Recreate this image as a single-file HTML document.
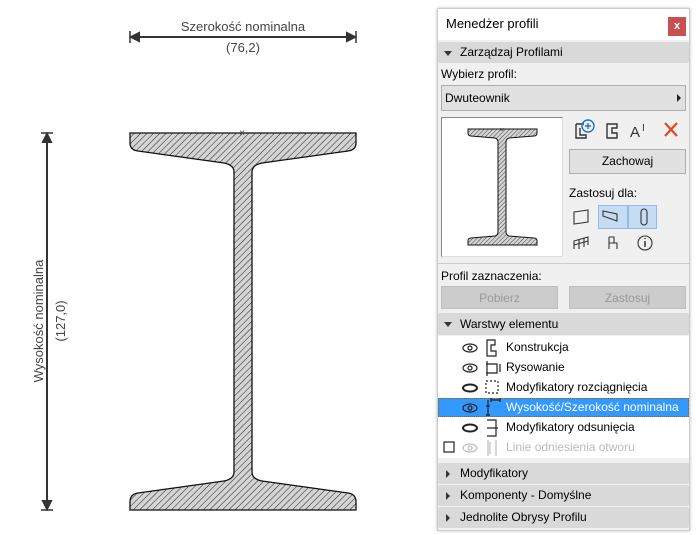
<!DOCTYPE html>
<html><head><meta charset="utf-8"><style>
*{margin:0;padding:0;box-sizing:border-box}
body{width:696px;height:535px;background:#fff;position:relative;overflow:hidden;font-family:"Liberation Sans",sans-serif;font-size:12px;color:#000}
.a{position:absolute}
.hdr{position:absolute;left:438px;width:251px;background:#d9d9d9;border-radius:2px;font-size:12px;line-height:21px;padding-left:22px}
.hdr:before{content:"";position:absolute;left:8px;top:7px;border-left:4px solid #333;border-top:4px solid transparent;border-bottom:4px solid transparent}
.hdr.o:before{left:6px;top:9px;border-top:5px solid #333;border-left:4px solid transparent;border-right:4px solid transparent;border-bottom:0}
.btn{position:absolute;background:#e1e1e1;border:1px solid #adadad;text-align:center;line-height:22px;font-size:12px}
.row{position:absolute;left:506px;font-size:12px}
</style></head><body>
<svg class="a" style="left:0;top:0" width="430" height="535">
<defs><pattern id="h" width="4.5" height="4.5" patternUnits="userSpaceOnUse" patternTransform="rotate(45)"><rect width="4.5" height="4.5" fill="#d4d4d4"/><line x1="0" y1="0" x2="0" y2="4.5" stroke="#222" stroke-width="1"/></pattern></defs>
<path d="M130,133 H356 V143 Q356,150 348,151 L262,163 Q252,165 252,172 V472 Q252,479 262,481 L348,493 Q356,494 356,502 V510 H130 V502 Q130,494 138,493 L224,481 Q234,479 234,472 V172 Q234,165 224,163 L138,151 Q130,150 130,143 Z" fill="url(#h)" stroke="#111" stroke-width="1.3"/>
<text x="242" y="136" font-size="10" fill="#444" text-anchor="middle" font-family="Liberation Sans">×</text>
<g stroke="#333" stroke-width="2" fill="#333">
<line x1="130" y1="37" x2="356" y2="37"/><line x1="130" y1="31" x2="130" y2="43" stroke-width="1.5"/><line x1="356" y1="31" x2="356" y2="43" stroke-width="1.5"/>
<path d="M131,37 l8,-4 v8z M355,37 l-8,-4 v8z"/>
<line x1="47" y1="133" x2="47" y2="510"/><line x1="41" y1="133" x2="53" y2="133" stroke-width="1.5"/><line x1="41" y1="510" x2="53" y2="510" stroke-width="1.5"/>
<path d="M47,134 l-4,8 h8z M47,509 l-4,-8 h8z"/>
</g>
<g font-family="Liberation Sans" font-size="13" fill="#444" text-anchor="middle">
<text x="243" y="31">Szerokość nominalna</text><text x="243" y="52">(76,2)</text>
<text transform="translate(43,321) rotate(-90)">Wysokość nominalna</text>
<text transform="translate(65,321) rotate(-90)">(127,0)</text>
</g>
</svg>
<div class="a" style="left:437px;top:8px;width:253px;height:523px;background:#f0f0f0;border:1px solid #ccc;box-shadow:0 0 3px #bbb"></div>
<div class="a" style="left:438px;top:9px;width:251px;height:31px;background:#fff"></div>
<div class="a" style="left:446px;top:16px;font-size:13px">Menedżer profili</div>
<div class="a" style="left:668px;top:17px;width:18px;height:19px;background:#c75050;color:#fff;font-size:11px;text-align:center;line-height:18px;font-weight:bold">x</div>
<div class="hdr o" style="top:42px;height:21px">Zarządzaj Profilami</div>
<div class="a" style="left:441px;top:67px">Wybierz profil:</div>
<div class="a" style="left:441px;top:85px;width:245px;height:26px;background:#e1e1e1;border:1px solid #adadad;line-height:24px;padding-left:3px">Dwuteownik</div>
<div class="a" style="left:677px;top:94px;border-left:4px solid #222;border-top:4px solid transparent;border-bottom:4px solid transparent"></div>
<div class="a" style="left:441px;top:117px;width:122px;height:140px;background:#fff;border:1px solid #888;border-right-color:#ddd;border-bottom-color:#ddd"></div>
<svg class="a" style="left:441px;top:117px" width="122" height="140">
<defs><pattern id="h2" width="3" height="3" patternUnits="userSpaceOnUse" patternTransform="rotate(45)"><rect width="3" height="3" fill="#d4d4d4"/><line x1="0" y1="0" x2="0" y2="3" stroke="#222" stroke-width="0.8"/></pattern></defs>
<path d="M27,12 H96 V16 Q96,19 93,19 L68,21 Q65,22 65,25 V115 Q65,118 68,119 L93,121 Q96,121 96,124 V128 H27 V124 Q27,121 30,121 L54,119 Q57,118 57,115 V25 Q57,22 54,21 L30,19 Q27,19 27,16 Z" fill="url(#h2)" stroke="#111" stroke-width="1"/>
<text x="61" y="15" font-size="7" fill="#333" text-anchor="middle">×</text>
</svg>
<svg class="a" style="left:572px;top:118px" width="115" height="24" fill="none" stroke="#333" stroke-width="1.4">
<path d="M4,6 H12 M4,6 V20 H14 V17 H8 V10"/><circle cx="16" cy="8" r="6" stroke="#1a73d0"/><path d="M16,5 V11 M13,8 H19" stroke="#1a73d0"/>
<path d="M35,6 H45 V10 H40 V15 H45 V20 H35 Z"/>
<text x="58" y="19" font-size="15" fill="#333" stroke="none" font-family="Liberation Sans">A</text><text x="70" y="13" font-size="10" fill="#333" stroke="none">I</text>
<path d="M93,5 L105,18 M105,5 L93,18" stroke="#e8431e" stroke-width="2.2"/>
</svg>
<div class="btn" style="left:569px;top:149px;width:117px;height:25px">Zachowaj</div>
<div class="a" style="left:569px;top:186px">Zastosuj dla:</div>
<div class="a" style="left:598px;top:205px;width:30px;height:24px;background:#c5dcf2;border:1px solid #8fbcea"></div>
<div class="a" style="left:628px;top:205px;width:29px;height:24px;background:#c5dcf2;border:1px solid #8fbcea"></div>
<svg class="a" style="left:569px;top:205px" width="120" height="52" fill="none" stroke="#333" stroke-width="1.1">
<path d="M5,7 L19,5 V17 L5,19 Z"/>
<path d="M34,6 L48,9 V16 L34,11 Z M34,6 V11"/>
<rect x="72" y="4" width="6" height="16" rx="3"/>
<path d="M5,44 V36 L19,32 V40 M5,40 L19,36 M10,44 V35 M15,42 V33"/>
<path d="M40,32 h5 v6 h3 v6 M40,32 v12 M40,38 h8"/>
<circle cx="76" cy="38" r="7"/><path d="M76,36 V42 M76,33 V34" stroke-width="1.5"/>
</svg>
<div class="a" style="left:438px;top:263px;width:251px;border-top:1px solid #ccc"></div>
<div class="a" style="left:441px;top:269px">Profil zaznaczenia:</div>
<div class="btn" style="left:441px;top:286px;width:117px;height:23px;color:#999;background:#ccc;border-color:#bfbfbf">Pobierz</div>
<div class="btn" style="left:569px;top:286px;width:117px;height:23px;color:#999;background:#ccc;border-color:#bfbfbf">Zastosuj</div>
<div class="hdr o" style="top:313px;height:22px;line-height:22px">Warstwy elementu</div>
<div class="a" style="left:438px;top:336px;width:251px;height:122px;background:#fff"></div>
<div class="a" style="left:438px;top:398px;width:251px;height:19px;background:#3399ff;border:1px dotted #a06000"></div>
<svg class="a" style="left:438px;top:336px" width="70" height="122" fill="none" stroke="#222" stroke-width="1.2">
<g><ellipse cx="32" cy="12" rx="7" ry="4"/><circle cx="32" cy="12" r="2"/></g>
<g><ellipse cx="32" cy="32" rx="7" ry="4"/><circle cx="32" cy="32" r="2"/></g>
<ellipse cx="32" cy="52" rx="7" ry="3.5" stroke-width="2"/>
<g><ellipse cx="32" cy="72" rx="7" ry="4"/><circle cx="32" cy="72" r="2"/></g>
<ellipse cx="32" cy="92" rx="7" ry="3.5" stroke-width="2"/>
<g stroke="#bbb"><ellipse cx="32" cy="112" rx="7" ry="4"/><circle cx="32" cy="112" r="2"/></g>
<rect x="6" y="106" width="10" height="10" stroke="#222"/>
<path d="M49,4 H57 V9 H53 V15 H58 V20 H49 Z"/>
<path d="M49,25 V40 M48,28 H59 V37 H48 M62,28 V36"/>
<rect x="48" y="45" width="12" height="12" stroke-dasharray="2 2"/>
<path d="M50,64 V80 M48,70 H52 M48,79 H52 M53,64 H62 M53,62 V66 M62,62 V66"/>
<path d="M49,84 H58 V100 H49 M49,92 H60"/>
<path d="M50,104 V120 M58,104 V120 M52,106 V118" stroke="#bbb"/>
</svg>
<div class="row" style="top:340px">Konstrukcja</div>
<div class="row" style="top:360px">Rysowanie</div>
<div class="row" style="top:380px">Modyfikatory rozciągnięcia</div>
<div class="row" style="top:400px;color:#fff">Wysokość/Szerokość nominalna</div>
<div class="row" style="top:420px">Modyfikatory odsunięcia</div>
<div class="row" style="top:440px;color:#bbb">Linie odniesienia otworu</div>
<div class="hdr" style="top:463px;height:21px">Modyfikatory</div>
<div class="hdr" style="top:485px;height:21px">Komponenty - Domyślne</div>
<div class="hdr" style="top:507px;height:21px">Jednolite Obrysy Profilu</div>
</body></html>
